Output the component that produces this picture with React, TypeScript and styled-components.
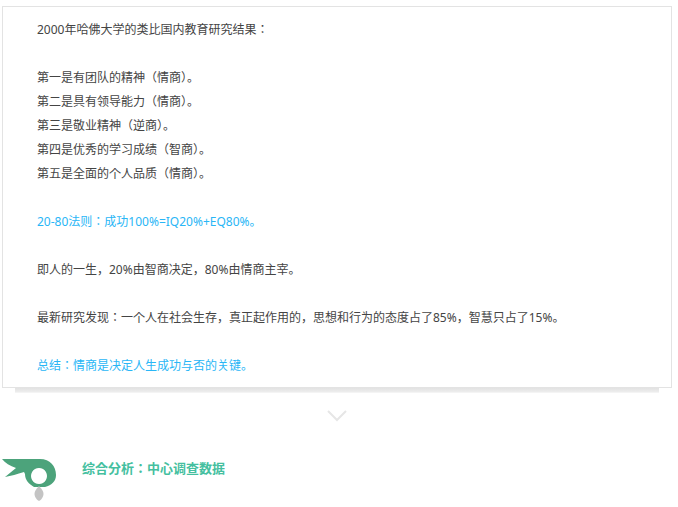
import React from "react";
import styled, { createGlobalStyle } from "styled-components";

const GlobalStyle = createGlobalStyle`
  html, body {
    margin: 0;
    padding: 0;
    background: #fff;
  }
  body {
    font-family: "Noto Sans", "Noto Sans CJK JP", sans-serif;
  }
`;

const lines: { text: string; accent?: boolean }[] = [
  { text: "2000年哈佛大学的类比国内教育研究结果：" },
  { text: "" },
  { text: "第一是有团队的精神（情商）。" },
  { text: "第二是具有领导能力（情商）。" },
  { text: "第三是敬业精神（逆商）。" },
  { text: "第四是优秀的学习成绩（智商）。" },
  { text: "第五是全面的个人品质（情商）。" },
  { text: "" },
  { text: "20-80法则：成功100%=IQ20%+EQ80%。", accent: true },
  { text: "" },
  { text: "即人的一生，20%由智商决定，80%由情商主宰。" },
  { text: "" },
  { text: "最新研究发现：一个人在社会生存，真正起作用的，思想和行为的态度占了85%，智慧只占了15%。" },
  { text: "" },
  { text: "总结：情商是决定人生成功与否的关键。", accent: true },
];

export default function App() {
  return (
    <Page>
      <GlobalStyle />
      <Card>
        {lines.map((line, i) => (
          <Line key={i} $accent={line.accent}>
            {line.text}
          </Line>
        ))}
      </Card>
      <CardShadow />
      <Chevron width="20" height="12" viewBox="0 0 20 12">
        <path d="M1 1l9 9 9-9" fill="none" stroke="#e6e6e6" strokeWidth="2" />
      </Chevron>
      <Section>
        <Logo width="58" height="46" viewBox="0 0 58 46">
          <path
            fillRule="evenodd"
            d="M2 2H40C50 2 56 9 56 18C56 24 52 28 45 30H34C29 27 25 23 25 17L24 15C17 17 11 19 5 20L16 11C10 9 5 6 2 2ZM39 11a8 8 0 1 0 .01 0Z"
            fill="#4ca37b"
          />
          <path
            d="M39 29C42 32 43.5 34.5 43.5 37C43.5 40 41 43 39 44C37 43 34.5 40 34.5 37C34.5 34.5 36 32 39 29Z"
            fill="#c4c4c4"
          />
        </Logo>
        <SectionTitle>综合分析：中心调查数据</SectionTitle>
      </Section>
    </Page>
  );
}

const Page = styled.div`
  width: 678px;
  height: 507px;
  overflow: hidden;
  padding-top: 6px;
  box-sizing: border-box;
`;

const Card = styled.div`
  width: 670px;
  margin-left: 2px;
  padding: 11px 34px 9px;
  box-sizing: border-box;
  border: 1px solid #e3e3e3;
  background: #fff;
`;

const Line = styled.p<{ $accent?: boolean }>`
  margin: 0;
  height: 24px;
  font-size: 12px;
  line-height: 24px;
  color: ${(p) => (p.$accent ? "#29b6f6" : "#444")};
`;

const CardShadow = styled.div`
  width: 644px;
  height: 5px;
  margin-left: 15px;
  background: linear-gradient(#e2e2e2, #ececec 70%, #f8f8f8);
`;

const Chevron = styled.svg`
  display: block;
  margin: 17px 0 0 327px;
`;

const Section = styled.div`
  display: flex;
  align-items: flex-start;
  margin-top: 35px;
`;

const Logo = styled.svg`
  display: block;
  flex: none;
`;

const SectionTitle = styled.h3`
  margin: 1px 0 0 24px;
  font-size: 13px;
  line-height: 20px;
  font-weight: 700;
  color: #45bfa0;
`;
